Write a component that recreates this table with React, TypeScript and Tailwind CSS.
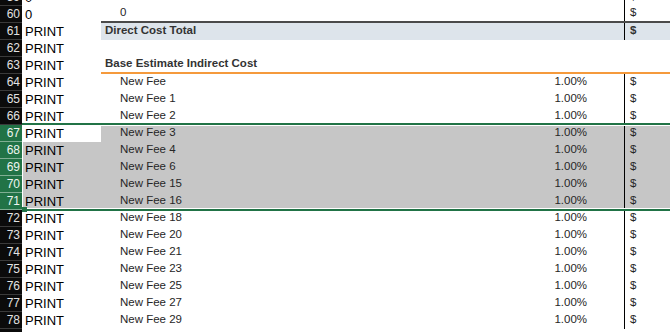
type Row = {
  n: number;
  a?: string;
  label?: string;
  kind?: 'plain' | 'total' | 'blank' | 'heading' | 'fee';
};

const top: Row[] = [
  { n: 59, a: '0', label: '0', kind: 'plain' },
  { n: 60, a: '0', label: '0', kind: 'plain' },
  { n: 61, a: 'PRINT', label: 'Direct Cost Total', kind: 'total' },
  { n: 62, a: 'PRINT', kind: 'blank' },
  { n: 63, a: 'PRINT', label: 'Base Estimate Indirect Cost', kind: 'heading' },
  { n: 64, a: 'PRINT', label: 'New Fee', kind: 'fee' },
  { n: 65, a: 'PRINT', label: 'New Fee 1', kind: 'fee' },
  { n: 66, a: 'PRINT', label: 'New Fee 2', kind: 'fee' },
];

const selected: Row[] = [
  { n: 67, a: 'PRINT', label: 'New Fee 3', kind: 'fee' },
  { n: 68, a: 'PRINT', label: 'New Fee 4', kind: 'fee' },
  { n: 69, a: 'PRINT', label: 'New Fee 6', kind: 'fee' },
  { n: 70, a: 'PRINT', label: 'New Fee 15', kind: 'fee' },
  { n: 71, a: 'PRINT', label: 'New Fee 16', kind: 'fee' },
];

const bottom: Row[] = [
  { n: 72, a: 'PRINT', label: 'New Fee 18', kind: 'fee' },
  { n: 73, a: 'PRINT', label: 'New Fee 20', kind: 'fee' },
  { n: 74, a: 'PRINT', label: 'New Fee 21', kind: 'fee' },
  { n: 75, a: 'PRINT', label: 'New Fee 23', kind: 'fee' },
  { n: 76, a: 'PRINT', label: 'New Fee 25', kind: 'fee' },
  { n: 77, a: 'PRINT', label: 'New Fee 27', kind: 'fee' },
  { n: 78, a: 'PRINT', label: 'New Fee 29', kind: 'fee' },
  { n: 79, kind: 'blank' },
];

const SheetRow = ({ row, sel, active }: { row: Row; sel?: boolean; active?: boolean }) => {
  const k = row.kind;
  const total = k === 'total';
  const heading = k === 'heading';
  const showRule = k !== 'blank' && k !== 'heading';
  const fill = sel ? 'bg-[#c6c6c6]' : total ? 'bg-[#dde4eb]' : 'bg-white';

  return (
    <div className="flex h-[17px] shrink-0">
      <div
        className={`w-[22px] shrink-0 flex items-center justify-end pr-[2px] text-[12px] border-b ${
          sel
            ? 'bg-[#217346] text-[#eef5f0] border-[#7fae93]'
            : 'bg-[#0b0b0b] text-[#e2e2e2] border-[#3a3a3a]'
        }`}
      >
        {row.n}
      </div>
      <div
        className={`w-[79px] shrink-0 flex items-center pl-[3px] text-[13px] text-black ${
          sel && !active ? 'bg-[#c6c6c6]' : 'bg-white'
        }`}
      >
        {row.a}
      </div>
      <div
        className={`flex flex-1 ${fill} ${
          row.n === 60 ? 'border-b-2 border-[#4a4a4a]' : heading ? 'border-b-2 border-[#f59a3c]' : ''
        }`}
      >
        <div
          className={`w-[523px] shrink-0 flex items-center justify-between text-[11.5px] pr-[37px] ${
            total || heading ? 'pl-[4px] font-bold text-[#333]' : 'pl-[19px] text-[#262626]'
          }`}
        >
          <span>{row.label}</span>
          {k === 'fee' && <span>1.00%</span>}
        </div>
        <div
          className={`flex-1 flex items-center pl-[5px] text-[11.5px] ${
            showRule ? 'border-l border-black' : ''
          } ${total ? 'font-bold text-[#333]' : 'text-[#262626]'}`}
        >
          {showRule ? '$' : ''}
        </div>
      </div>
    </div>
  );
};

export default function App() {
  return (
    <div className="w-[670px] h-[332px] overflow-hidden bg-white font-['Liberation_Sans',Arial,sans-serif] leading-none">
      <div className="flex flex-col -mt-[11.5px]">
        {top.map((row) => (
          <SheetRow key={row.n} row={row} />
        ))}

        <div className="relative flex flex-col">
          {selected.map((row, i) => (
            <SheetRow key={row.n} row={row} sel active={i === 0} />
          ))}
          {/* selection outline with fill handle */}
          <div className="absolute left-[22px] right-0 -top-[2px] -bottom-[1px] border-y-2 border-[#217346] shadow-[inset_0_1px_0_#fff,inset_0_-1px_0_#fff,inset_1px_0_0_#fff] pointer-events-none">
            <div className="absolute left-0 -bottom-[3px] w-[5px] h-[5px] bg-[#217346]" />
          </div>
        </div>

        {bottom.map((row) => (
          <SheetRow key={row.n} row={row} />
        ))}
      </div>
    </div>
  );
}
